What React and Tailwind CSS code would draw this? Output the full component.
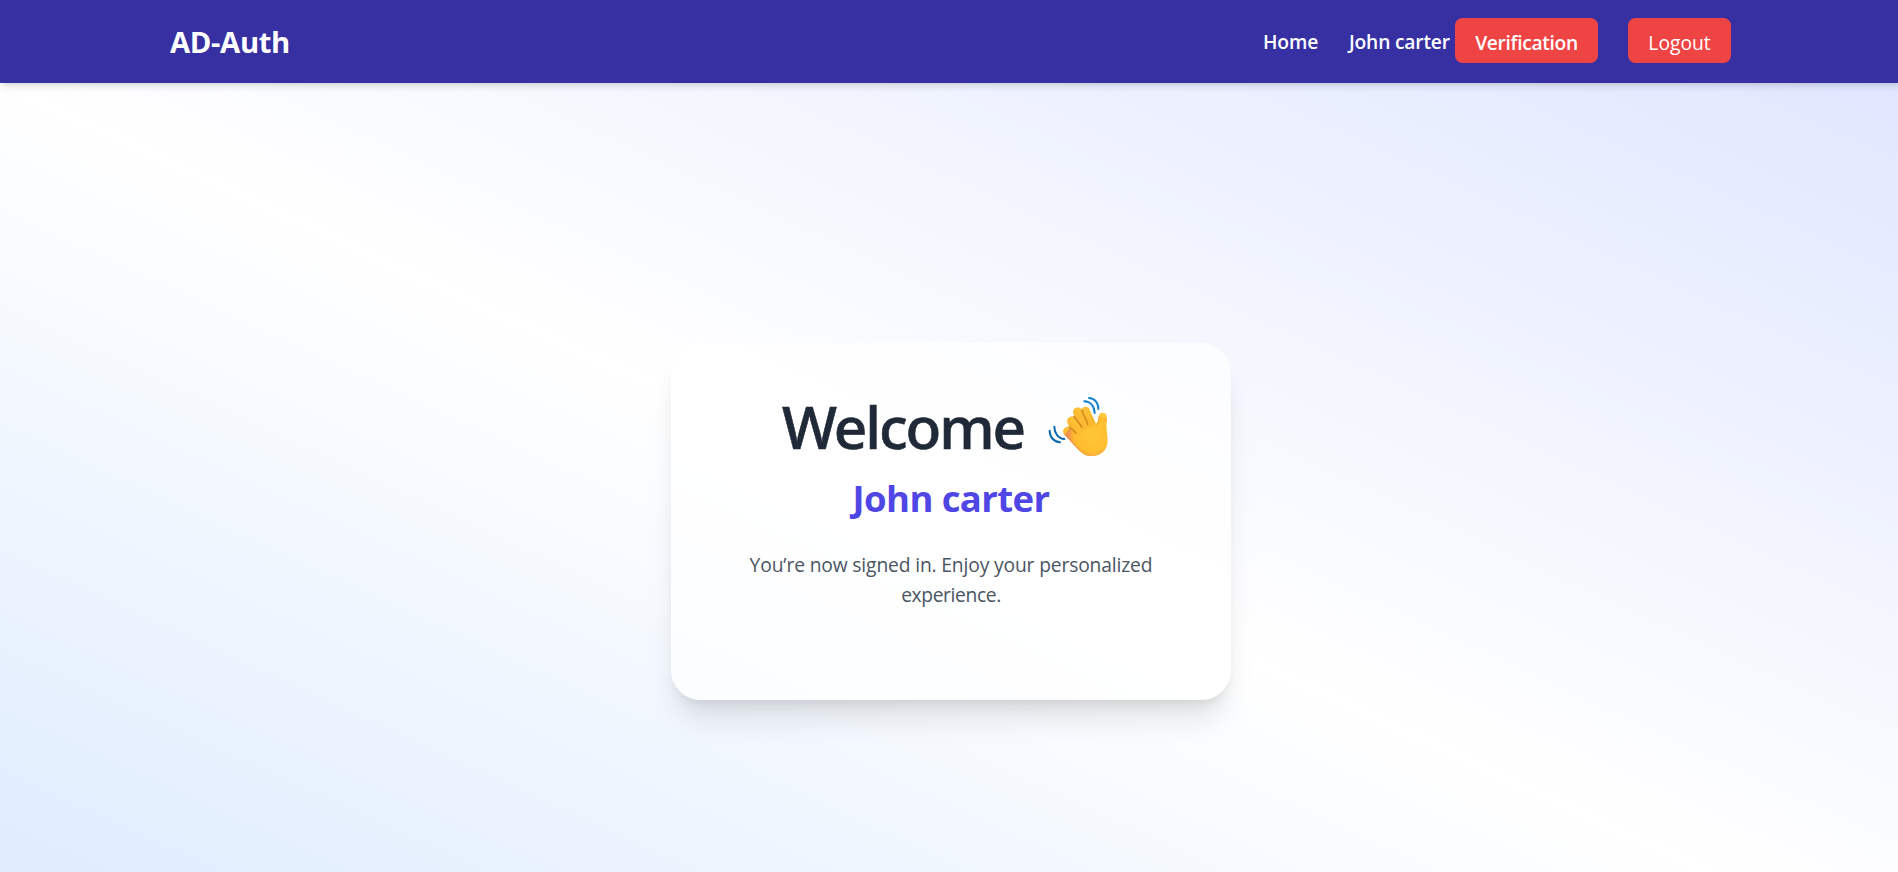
function WavingHand() {
  return (
    <svg viewBox="24 21 180 183" className="h-[61px] w-[60px] shrink-0 overflow-visible" role="img" aria-label="Waving hand">
      <defs>
        <linearGradient id="skin" gradientUnits="userSpaceOnUse" x1="170" y1="80" x2="112" y2="190">
          <stop offset="0" stopColor="#ffca3e" />
          <stop offset="0.72" stopColor="#ffbd30" />
          <stop offset="1" stopColor="#f59a58" />
        </linearGradient>
        <radialGradient id="palm" gradientUnits="userSpaceOnUse" cx="158" cy="136" r="70">
          <stop offset="0" stopColor="#ffc637" />
          <stop offset="0.75" stopColor="#ffbe30" />
          <stop offset="0.9" stopColor="#fbae35" />
          <stop offset="1" stopColor="#f1934c" />
        </radialGradient>
        <linearGradient id="finger" x1="1" y1="0" x2="0" y2="1">
          <stop offset="0" stopColor="#ffcb42" />
          <stop offset="0.6" stopColor="#fdb931" />
          <stop offset="1" stopColor="#e99a2c" />
        </linearGradient>
      </defs>
      <g fill="none" stroke="#1680cc" strokeWidth="6" strokeLinecap="round">
        <path d="M147 27C163 28 175 40 175 60" />
        <path d="M133 37C151 38 163 51 164 72" />
        <path d="M43 113C43 132 55 149 73 150" stroke="#0d69b0" />
        <path d="M29 125C29 144 42 159 60 160" stroke="#0d69b0" />
      </g>
      <path
        d="M74 118C67 122 68 131 74 138L116 183C130 198 143 202 158 201C184 199 201 182 202 158C203 135 198 124 199 105L201 86C201 76 196 71 189 71C181 71 176 76 175 86C174 94 173 102 168 105L148 60C143 51 129 51 126 61C116 50 99 56 100 70L102 84C93 79 80 87 82 98L88 115C83 112 78 114 74 118Z"
        fill="url(#skin)"
      />
      <path d="M90 117L168 104C175 101 179 90 182 82L201 90L199 105C198 124 203 135 202 158C201 182 184 199 158 201C143 202 130 198 116 183L74 138Z" fill="url(#palm)" />
      <path d="M126 61C124 67 127 72 130 78L150 115L166 107L148 60C143 51 129 51 126 61Z" fill="url(#finger)" />
      <path d="M100 70C100 76 104 81 107 87L130 124L150 115L127 64C116 50 99 56 100 70Z" fill="url(#finger)" />
      <path d="M82 98C83 104 86 110 91 115L116 143L130 124L107 87C99 78 80 85 82 98Z" fill="url(#finger)" />
      <g fill="none" strokeLinecap="round">
        <path d="M126 64C127 76 139 89 143 106" stroke="#c98115" strokeWidth="5" opacity="0.8" />
        <path d="M102 83C107 91 119 102 125 115" stroke="#c98115" strokeWidth="5" opacity="0.8" />
        <path d="M88 114C94 120 102 125 108 132" stroke="#c98115" strokeWidth="5" opacity="0.75" />
        <path d="M153 80C157 91 162 99 166 105" stroke="#e29a20" strokeWidth="3" opacity="0.65" />
        <path d="M177 83C177 96 174 104 169 108" stroke="#dc911f" strokeWidth="3" opacity="0.6" />
        <path d="M75 137L117 182" stroke="#ee8b64" strokeWidth="3" opacity="0.6" />
      </g>
    </svg>
  );
}

function Navbar() {
  return (
    <nav className="relative z-10 flex h-[83px] shrink-0 items-start justify-between bg-[#3730a3] pr-[171px] pl-[171px] text-white shadow-[0_5px_7.5px_-1.25px_rgba(0,0,0,0.1),0_2.5px_5px_-2.5px_rgba(0,0,0,0.1)]">
      <div className="mt-[20px] -ml-px text-[29.25px] leading-[45px] font-bold tracking-[-0.38px]">AD-Auth</div>
      <div className="mt-[18px] flex h-[45px] items-center text-[19.25px] leading-[45px]">
        <a className="mr-[29px] w-[57px] pt-[2px] font-semibold tracking-[-0.1px] whitespace-nowrap">Home</a>
        <a className="mr-[5px] w-[101px] pt-[2px] font-semibold tracking-[-0.2px] whitespace-nowrap">John carter</a>
        <button className="mr-[30px] h-[45px] w-[143px] rounded-[7.5px] bg-[#ef4444] pt-[2px] font-semibold tracking-[-0.35px]">
          Verification
        </button>
        <button className="h-[45px] w-[103px] rounded-[7.5px] bg-[#ef4444] pt-[2px]">Logout</button>
      </div>
    </nav>
  );
}

function WelcomeCard() {
  return (
    <section className="h-[357px] w-[560px] rounded-[30px] bg-white/70 pt-[53px] text-center shadow-[0_25px_31.25px_-6.25px_rgba(0,0,0,0.1),0_10px_12.5px_-7.5px_rgba(0,0,0,0.1)]">
      <h1 className="flex h-[60px] items-start pl-[111px] text-[#1f2937]">
        <span className="w-[266px] text-left font-['Noto_Sans',sans-serif] text-[58.5px] leading-[60px] font-medium tracking-[-2.1px] [-webkit-text-stroke:0.6px_#1f2937]">
          Welcome
        </span>
        <WavingHand />
      </h1>
      <h2 className="mt-[20px] text-[36.5px] leading-[45px] font-bold tracking-[-0.6px] text-[#4f46e5]">John carter</h2>
      <p className="mt-[29px] px-[60px] text-[19.25px] leading-[30px] tracking-[-0.15px] text-[#4b5563]">
        You’re now signed in. Enjoy your personalized <span className="tracking-[-0.38px]">experience.</span>
      </p>
    </section>
  );
}

export default function App() {
  return (
    <div className="h-[872px] w-full overflow-hidden font-['Open_Sans','Noto_Sans',sans-serif]">
      <div className="flex h-[960px] w-[1902px] flex-col">
        <Navbar />
        <main className="flex flex-1 items-center justify-center bg-[linear-gradient(to_top_right,#dbeafe,#ffffff,#e0e7ff)]">
          <WelcomeCard />
        </main>
      </div>
    </div>
  );
}
